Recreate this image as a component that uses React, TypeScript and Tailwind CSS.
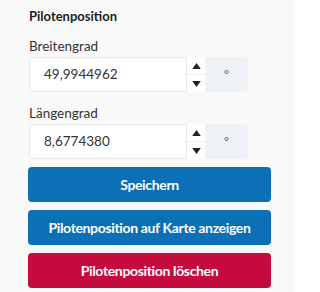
import type { ReactNode } from 'react';

const font = { fontFamily: 'Lato, "Noto Sans", sans-serif' };

function Spinner() {
  return (
    <div className="flex w-[19px] flex-col border-l border-[#e6e8eb] bg-white">
      <div className="flex flex-1 items-center justify-center border-b border-[#eceef0]">
        <svg width="9" height="6" viewBox="0 0 10 7">
          <path d="M5 0L10 7H0z" fill="#222" />
        </svg>
      </div>
      <div className="flex flex-1 items-center justify-center">
        <svg width="9" height="6" viewBox="0 0 10 7">
          <path d="M0 0H10L5 7z" fill="#222" />
        </svg>
      </div>
    </div>
  );
}

function CoordField(props: { readonly label: string; readonly value: string }) {
  return (
    <div className="flex flex-col">
      <label className="h-[22px] pt-[1px] text-[13.5px] leading-[20px] text-[#333]">{props.label}</label>
      <div className="flex h-[35px] w-[219px]">
        <div className="flex flex-1 items-center rounded-l-[4px] border border-r-0 border-[#e6e8eb] bg-white">
          <span className="ml-[14px] text-[13.5px] text-[#333]">{props.value}</span>
        </div>
        <Spinner />
        <div className="flex w-[43px] items-center justify-center rounded-r-[4px] bg-[#eef1f5] text-[12px] text-[#555]">
          °
        </div>
      </div>
    </div>
  );
}

function Btn(props: { readonly children: ReactNode; readonly danger?: boolean }) {
  return (
    <button
      className={
        'flex h-[35px] w-[243px] items-center justify-center rounded-[4px] text-[14px] font-bold tracking-[-0.35px] text-white ' +
        (props.danger ? 'bg-[#c50a3e]' : 'bg-[#0b70b5]')
      }
    >
      {props.children}
    </button>
  );
}

export default function App() {
  return (
    <div className="h-[292px] w-[295px] bg-[#f9f9f9] pl-[29px] pt-[6px]" style={font}>
      <h2 className="h-[20px] text-[13px] font-bold leading-[20px] text-[#222]">Pilotenposition</h2>
      <div className="mt-[9px] flex flex-col gap-[10px]">
        <CoordField label="Breitengrad" value="49,9944962" />
        <CoordField label="Längengrad" value="8,6774380" />
      </div>
      <div className="ml-[-1px] mt-[8px] flex flex-col gap-[8px]">
        <Btn>Speichern</Btn>
        <Btn>Pilotenposition auf Karte anzeigen</Btn>
        <Btn danger>Pilotenposition löschen</Btn>
      </div>
    </div>
  );
}
